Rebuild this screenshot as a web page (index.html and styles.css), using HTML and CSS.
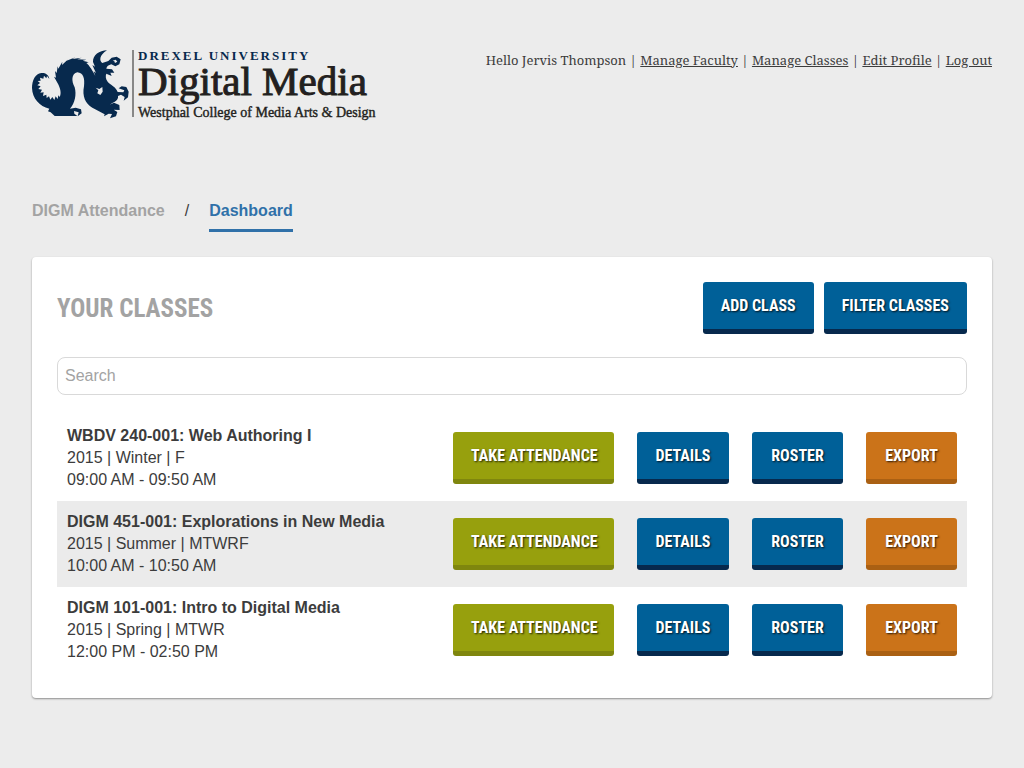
FILE: index.html
```html
<!DOCTYPE html>
<html lang="en">
<head>
<meta charset="utf-8">
<title>DIGM Attendance - Dashboard</title>
<meta name="viewport" content="width=device-width, initial-scale=1">
<link rel="stylesheet" href="styles.css">
</head>
<body>
<header class="site-header">
  <a class="logo" href="#" aria-label="Drexel University Digital Media">
    <svg class="dragon" viewBox="24 30 294 216" aria-hidden="true">
      <path d="M76 117C74 103 63 98 52 99C34 101 24 121 24 144C25 175 46 199 76 206L72 214L80 217L92 228H160L151 221L150 213L164 217L161 229L173 220L171 208L155 203L138 206C153 190 158 163 152 142C142 123 142 101 160 97C178 98 183 116 180 139C174 168 184 192 205 203L242 223L240 229L254 221L264 222L258 235L276 229L280 216L269 209L287 210L286 195L270 188L257 194C273 185 284 180 282 168L291 164L302 171L299 182L312 172L314 155L307 141L293 139L284 145L301 151L298 157L281 156C276 140 259 135 251 125C245 117 244 108 247 101L263 108L259 98L271 98L264 88L247 86C248 79 254 75 262 73L274 79L286 73L290 58L278 50L263 53L253 63L235 69C225 63 226 45 249 31C226 32 206 45 207 66L213 80L205 75L216 99L209 94L214 108C207 94 196 76 187 69L194 67L176 62L187 59L160 58L173 53L145 57L154 52L128 62L134 56L114 75L115 65L103 86L101 79L98 99L93 93L96 113L90 110L101 130C109 145 113 160 107 171L103 166L101 177L95 169L91 180L85 171L79 179L75 169L68 174L67 164L57 168L59 157L49 158L54 149L43 147L50 139L40 136L48 129L41 123L50 122L48 113L58 116L60 107L67 115L69 108ZM215 143L226 147L235 141L236 155L229 165L220 160L223 151Z" fill-rule="evenodd"/>
      <path class="eye" d="M266 62L275 59L280 65L273 69L271 64Z"/>
    </svg>
    <span class="wordmark">
      <span class="university">DREXEL UNIVERSITY</span>
      <span class="program">Digital Media</span>
      <span class="college">Westphal College of Media Arts &amp; Design</span>
    </span>
  </a>
  <nav class="user-nav">Hello Jervis Thompson | <a href="#">Manage Faculty</a> | <a href="#">Manage Classes</a> | <a href="#">Edit Profile</a> | <a href="#">Log out</a></nav>
</header>
<nav class="breadcrumb" aria-label="Breadcrumb">
  <a href="#">DIGM Attendance</a><span>/</span><a class="current" href="#" aria-current="page">Dashboard</a>
</nav>
<main class="card">
  <div class="card-head">
    <h1>YOUR CLASSES</h1>
    <div class="actions">
      <button class="btn" type="button">ADD CLASS</button>
      <button class="btn" type="button">FILTER CLASSES</button>
    </div>
  </div>
  <input class="search" type="search" placeholder="Search" aria-label="Search">
  <ul class="classes">
    <li>
      <div class="info"><h2>WBDV 240-001: Web Authoring I</h2><p>2015 | Winter | F</p><p>09:00 AM - 09:50 AM</p></div>
      <div class="row-actions"><button class="btn green" type="button">TAKE ATTENDANCE</button><button class="btn" type="button">DETAILS</button><button class="btn" type="button">ROSTER</button><button class="btn orange" type="button">EXPORT</button></div>
    </li>
    <li>
      <div class="info"><h2>DIGM 451-001: Explorations in New Media</h2><p>2015 | Summer | MTWRF</p><p>10:00 AM - 10:50 AM</p></div>
      <div class="row-actions"><button class="btn green" type="button">TAKE ATTENDANCE</button><button class="btn" type="button">DETAILS</button><button class="btn" type="button">ROSTER</button><button class="btn orange" type="button">EXPORT</button></div>
    </li>
    <li>
      <div class="info"><h2>DIGM 101-001: Intro to Digital Media</h2><p>2015 | Spring | MTWR</p><p>12:00 PM - 02:50 PM</p></div>
      <div class="row-actions"><button class="btn green" type="button">TAKE ATTENDANCE</button><button class="btn" type="button">DETAILS</button><button class="btn" type="button">ROSTER</button><button class="btn orange" type="button">EXPORT</button></div>
    </li>
  </ul>
</main>
</body>
</html>
```
FILE: styles.css
```css
* { box-sizing: border-box; }
body { margin: 0; padding: 48px 32px; background: #ececec; color: #3c3c3c; font: 16px/22px "Liberation Sans", Arial, sans-serif; }
h1, h2, p, ul { margin: 0; padding: 0; }
.site-header { display: flex; justify-content: space-between; align-items: flex-start; }
.logo { display: flex; gap: 2px; padding-top: 2px; color: #231f20; text-decoration: none; }
.dragon { width: 98px; height: 72px; fill: #07294d; }
.dragon .eye { fill: #ececec; }
.wordmark { display: flex; flex-direction: column; border-left: 2px solid #888; height: 67px; padding-left: 4px; font-family: "Liberation Serif", "Times New Roman", serif; white-space: nowrap; }
.university { color: #07294d; font-size: 13px; line-height: 12px; letter-spacing: 2px; font-weight: bold; }
.program { font-size: 41px; line-height: 38px; -webkit-text-stroke: 1px #231f20; }
.college { font-size: 14px; line-height: 26px; -webkit-text-stroke: 0.4px #231f20; }
.user-nav { font-family: "Noto Serif", "Liberation Serif", serif; font-size: 13px; line-height: 24px; }
.user-nav a { color: inherit; }
.breadcrumb { display: flex; gap: 20px; margin-top: 77px; font-weight: bold; line-height: 24px; }
.breadcrumb a { color: #a3a3a3; text-decoration: none; }
.breadcrumb span { font-weight: normal; }
.breadcrumb .current { color: #3071a9; border-bottom: 3px solid #3071a9; padding-bottom: 6px; }
.card { margin-top: 25px; padding: 25px; background: #fff; border-radius: 4px; box-shadow: 0 1px 2px rgba(0,0,0,.4); }
.card-head { display: flex; justify-content: space-between; align-items: center; }
h1 { color: #a3a3a3; font: bold 25px/32px "Roboto Condensed", "Liberation Sans Narrow", sans-serif; padding-top: 2px; }
.actions { display: flex; gap: 10px; }
.btn { height: 52px; padding: 0 18px; border: 0; border-bottom: 5px solid #07294d; border-radius: 3px; background: #006098; color: #fff; font: bold 16px/20px "Roboto Condensed", "Liberation Sans Narrow", sans-serif; text-shadow: 1px 1px 2px rgba(0,0,0,.8); white-space: nowrap; }
.green { background: #97a00d; border-color: #7f860e; }
.orange { background: #cb7319; border-color: #aa6013; }
.search { display: block; width: 100%; height: 38px; margin: 23px 0 20px; padding: 0 7px; border: 1px solid #d9d9d9; border-radius: 8px; font: inherit; appearance: none; }
.search::placeholder { color: #a3a3a3; }
.classes { list-style: none; }
.classes li { display: flex; align-items: center; justify-content: space-between; padding: 10px; }
.classes li:nth-child(even) { background: #ebebeb; }
h2 { font-size: 16px; line-height: 22px; }
.row-actions { display: grid; grid-template-columns: 161px 92px 91px 91px; gap: 23px; }
```
